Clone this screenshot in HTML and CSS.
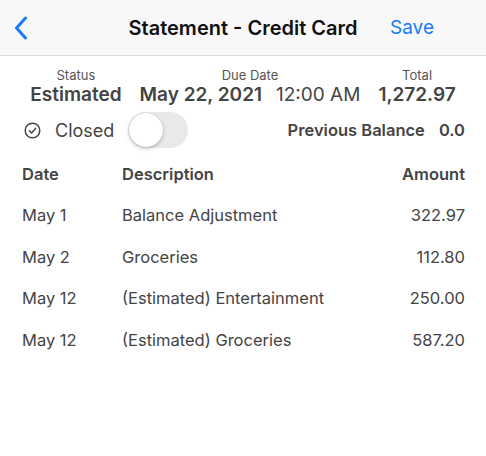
FILE: index.html
```html
<!DOCTYPE html>
<html>
<head>
<meta charset="utf-8">
<link rel="stylesheet" href="styles.css">
</head>
<body>
<header class="nav">
  <svg class="back" width="14" height="24" viewBox="0 0 14 24"><path d="M11.5 2 L2.5 12 L11.5 22" fill="none" stroke="#1a7cf5" stroke-width="3" stroke-linecap="round" stroke-linejoin="round"/></svg>
  <h1 class="title">Statement - Credit Card</h1>
  <span class="save">Save</span>
</header>
<section class="summary">
  <div class="col">
    <div class="label">Status</div>
    <div class="value"><b>Estimated</b></div>
  </div>
  <div class="col">
    <div class="label">Due Date</div>
    <div class="value"><b>May 22, 2021</b><span class="time">12:00 AM</span></div>
  </div>
  <div class="col">
    <div class="label">Total</div>
    <div class="value"><b>1,272.97</b></div>
  </div>
</section>
<section class="status-row">
  <div class="closed">
    <svg class="check" width="17" height="17" viewBox="0 0 17 17"><circle cx="8.5" cy="8.5" r="7.3" fill="none" stroke="#444" stroke-width="1.5"/><path d="M5.3 8.7 L7.6 11 L11.8 6.3" fill="none" stroke="#444" stroke-width="1.5" stroke-linecap="round" stroke-linejoin="round"/></svg>
    <span class="closed-label">Closed</span>
    <span class="switch"><span class="knob"></span></span>
  </div>
  <div class="prev">
    <span>Previous Balance</span>
    <span>0.0</span>
  </div>
</section>
<table class="tx">
  <thead>
    <tr><th class="c-date">Date</th><th class="c-desc">Description</th><th class="c-amt">Amount</th></tr>
  </thead>
  <tbody>
    <tr><td>May 1</td><td>Balance Adjustment</td><td class="c-amt">322.97</td></tr>
    <tr><td>May 2</td><td>Groceries</td><td class="c-amt">112.80</td></tr>
    <tr><td>May 12</td><td>(Estimated) Entertainment</td><td class="c-amt">250.00</td></tr>
    <tr><td>May 12</td><td>(Estimated) Groceries</td><td class="c-amt">587.20</td></tr>
  </tbody>
</table>
</body>
</html>
```
FILE: styles.css
```css
* { box-sizing: border-box; }
html, body { margin: 0; padding: 0; background: #fff; }
body {
  font-family: Inter, "Noto Sans", sans-serif;
  color: #444;
  width: 486px;
}
.nav {
  height: 56px;
  background: #f8f8f8;
  border-bottom: 1px solid #dcdcdc;
  display: flex;
  align-items: center;
  position: relative;
  padding: 0 14px;
}
.back { margin-top: 1px; }
.title {
  position: absolute;
  left: 0; right: 0;
  text-align: center;
  margin: 0;
  font-size: 20px;
  font-weight: 600;
  color: #111;
  pointer-events: none;
}
.save {
  position: absolute;
  left: 390px;
  font-size: 19px;
  color: #1a7cf5;
}
.summary {
  display: flex;
  justify-content: center;
  gap: 18px;
  padding-top: 11px;
}
.col { display: flex; flex-direction: column; align-items: center; }
.label { font-size: 13px; color: #555; line-height: 16px; }
.value { font-size: 19px; line-height: 24px; color: #444; }
.value b { font-weight: 600; }
.time { margin-left: 14px; }
.status-row {
  display: flex;
  justify-content: space-between;
  align-items: center;
  padding: 4px 21px 0 24px;
  height: 42px;
}
.closed { display: flex; align-items: center; }
.check { display: block; }
.closed-label { font-size: 18px; margin-left: 14px; }
.switch {
  margin-left: 14px;
  width: 60px; height: 36px;
  border-radius: 18px;
  background: #e9e9eb;
  position: relative;
  display: inline-block;
}
.knob {
  position: absolute;
  left: 1px; top: 1px;
  width: 34px; height: 34px;
  border-radius: 50%;
  background: #fff;
  box-shadow: 0 2px 4px rgba(0,0,0,0.2), 0 0 1px rgba(0,0,0,0.25);
}
.prev { display: flex; gap: 14px; font-size: 16.5px; font-weight: 600; }
.tx {
  width: 100%;
  border-collapse: collapse;
  margin-top: 4px;
  font-size: 16.5px;
}
.tx th, .tx td { padding: 0; height: 41.7px; text-align: left; }
.tx th { font-weight: 600; height: 41px; }
.tx td:first-child, .tx th:first-child { padding-left: 22px; width: 122px; }
.tx .c-amt { text-align: right; padding-right: 21px; }
```
